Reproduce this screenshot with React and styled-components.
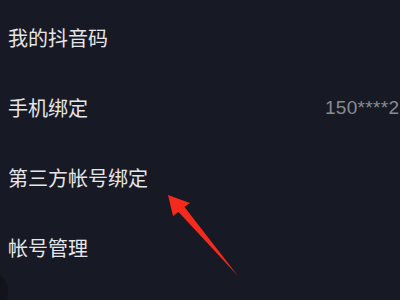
import React from 'react'
import styled, { createGlobalStyle } from 'styled-components'

const GlobalStyle = createGlobalStyle`
  html, body {
    margin: 0;
    padding: 0;
    background: #171924;
  }
  body {
    font-family: "Noto Sans CJK SC", "Noto Sans", sans-serif;
    -webkit-font-smoothing: antialiased;
  }
`

const Screen = styled.div`
  position: relative;
  width: 400px;
  height: 300px;
  overflow: hidden;
  background: #171924;
  padding-top: 3px;
  box-sizing: border-box;
`

const List = styled.ul`
  list-style: none;
  margin: 0;
  padding: 0 0 0 8px;
`

const Row = styled.li`
  display: grid;
  grid-template-columns: 317px max-content;
  align-items: center;
  height: 70px;
`

const Label = styled.span`
  font-size: 20px;
  line-height: 1;
  color: #e6e6e8;
  white-space: nowrap;
`

const Value = styled.span`
  font-family: "Liberation Sans", Arial, sans-serif;
  font-size: 19px;
  color: #8a8b92;
  white-space: nowrap;
  letter-spacing: 0.3px;
`

const FloatButton = styled.div`
  position: absolute;
  left: -36px;
  top: 270px;
  width: 44px;
  height: 44px;
  border-radius: 50%;
  background: #12131b;
`

const Annotation = styled.svg`
  position: absolute;
  left: 0;
  top: 0;
  pointer-events: none;
`

const items = [
  { label: '我的抖音码' },
  { label: '手机绑定', value: '150****2345' },
  { label: '第三方帐号绑定' },
  { label: '帐号管理' },
]

export default function App() {
  return (
    <Screen>
      <GlobalStyle />
      <List>
        {items.map(item => (
          <Row key={item.label}>
            <Label>{item.label}</Label>
            {item.value && <Value>{item.value}</Value>}
          </Row>
        ))}
      </List>
      <FloatButton />
      <Annotation width="400" height="300" viewBox="0 0 400 300">
        <polygon
          points="168,195 190,203 184.5,207 238,276 178.5,212 173,216"
          fill="#f42a1c"
        />
      </Annotation>
    </Screen>
  )
}
